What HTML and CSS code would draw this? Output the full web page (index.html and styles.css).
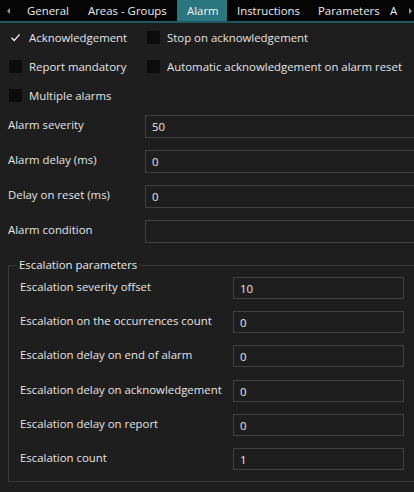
FILE: index.html
```html
<!DOCTYPE html>
<html>
<head>
<meta charset="utf-8">
<link rel="stylesheet" href="styles.css">
</head>
<body>
<div class="tabs">
  <span class="arrow left"></span>
  <div class="tab t-general">General</div>
  <div class="tab t-areas">Areas - Groups</div>
  <div class="tab active t-alarm">Alarm</div>
  <div class="tab t-instr">Instructions</div>
  <div class="tab t-params">Parameters</div>
  <div class="tab t-a">A</div>
  <span class="arrow right"></span>
</div>

<div class="checks">
  <label class="chk c1"><span class="box checked"><svg viewBox="0 0 13 13" width="13" height="13"><path d="M2.5 6.8 L5.2 9.5 L10.6 3.4" fill="none" stroke="#f0f0f0" stroke-width="1.3"/></svg></span>Acknowledgement</label>
  <label class="chk c2"><span class="box"></span>Stop on acknowledgement</label>
  <label class="chk c1"><span class="box"></span>Report mandatory</label>
  <label class="chk c2"><span class="box"></span>Automatic acknowledgement on alarm reset</label>
  <label class="chk c1"><span class="box"></span>Multiple alarms</label>
</div>

<div class="form">
  <div class="row"><span class="lbl">Alarm severity</span><div class="input">50</div></div>
  <div class="row"><span class="lbl">Alarm delay (ms)</span><div class="input">0</div></div>
  <div class="row"><span class="lbl">Delay on reset (ms)</span><div class="input">0</div></div>
  <div class="row"><span class="lbl">Alarm condition</span><div class="input"></div></div>
</div>

<fieldset class="group">
  <legend>Escalation parameters</legend>
  <div class="erow"><span class="elbl">Escalation severity offset</span><div class="einput">10</div></div>
  <div class="erow"><span class="elbl">Escalation on the occurrences count</span><div class="einput">0</div></div>
  <div class="erow"><span class="elbl">Escalation delay on end of alarm</span><div class="einput">0</div></div>
  <div class="erow"><span class="elbl">Escalation delay on acknowledgement</span><div class="einput">0</div></div>
  <div class="erow"><span class="elbl">Escalation delay on report</span><div class="einput">0</div></div>
  <div class="erow"><span class="elbl">Escalation count</span><div class="einput">1</div></div>
</fieldset>
</body>
</html>
```
FILE: styles.css
```css
html, body {
  margin: 0;
  padding: 0;
  background: #1e1e1e;
  overflow: hidden;
  width: 414px;
  height: 492px;
}
body {
  font-family: "Open Sans", "Noto Sans", sans-serif;
  font-size: 11.4px;
  color: #e4e4e4;
}
.tabs {
  display: flex;
  align-items: stretch;
  height: 21px;
  background: #050505;
  border-bottom: 2px solid #1d5a60;
  position: relative;
  white-space: nowrap;
  overflow: hidden;
}
.arrow {
  width: 17px;
  flex: none;
  display: flex;
  align-items: center;
  justify-content: center;
}
.arrow::before {
  content: "";
  display: block;
  width: 0;
  height: 0;
  border-top: 3px solid transparent;
  border-bottom: 3px solid transparent;
}
.arrow.left::before {
  border-right: 3px solid #9a9a9a;
}
.arrow.right {
  position: absolute;
  right: 0;
  top: 0;
  bottom: 0;
  width: 8px;
}
.arrow.right::before {
  border-left: 3px solid #9a9a9a;
}
.tab {
  padding: 0 10px;
  line-height: 22px;
  color: #ececec;
  flex: none;
}
.t-general { width: 41px; }
.t-areas { width: 79px; }
.t-alarm { width: 30px; }
.t-instr { width: 61px; }
.t-params { width: 58px; }
.t-a { padding-left: 4px; }
.tab.active {
  background: #2a7780;
  color: #f4f4f4;
}
.checks {
  display: grid;
  grid-template-columns: 138px 1fr;
  grid-auto-rows: 29px;
  padding-left: 9px;
  padding-top: 0;
}
.chk {
  display: flex;
  align-items: center;
  white-space: nowrap;
}
.box {
  width: 13px;
  height: 13px;
  background: #0c0c0c;
  margin-right: 7px;
  flex: none;
  display: block;
}
.box.checked {
  background: transparent;
}
.box svg { display: block; }
.form {
  display: flex;
  flex-direction: column;
  gap: 12px;
  padding-top: 5px;
  padding-left: 8px;
}
.row {
  display: flex;
  align-items: center;
  height: 23px;
}
.lbl {
  width: 137px;
  flex: none;
  margin-top: -4px;
}
.input {
  flex: none;
  width: 300px;
  height: 21px;
  border: 1px solid #424242;
  box-sizing: content-box;
  padding-left: 6px;
  line-height: 22px;
  color: #e8e8e8;
}
.group {
  margin: 14px 0 0 8px;
  width: 430px;
  padding: 4px 0 11px 11px;
  border: 1px solid #3a3a3a;
  display: flex;
  flex-direction: column;
  gap: 12.2px;
  box-sizing: border-box;
  min-width: 0;
}
legend {
  padding: 0 3px;
  margin-left: -4px;
  line-height: 16px;
  color: #e8e8e8;
}
.erow {
  display: flex;
  align-items: center;
  height: 22px;
}
.elbl {
  width: 213px;
  flex: none;
  white-space: nowrap;
  overflow: hidden;
  margin-top: -3px;
}
.einput {
  width: 163px;
  height: 20px;
  border: 1px solid #424242;
  padding-left: 6px;
  line-height: 21px;
  color: #e8e8e8;
  flex: none;
}
```
